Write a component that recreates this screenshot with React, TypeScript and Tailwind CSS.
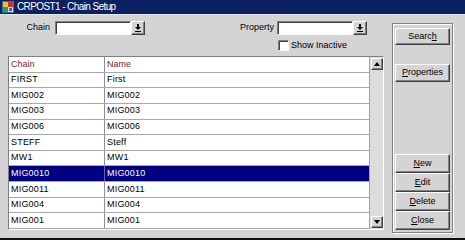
import React from "react";

const rows: [string, string][] = [
  ["FIRST", "First"],
  ["MIG002", "MIG002"],
  ["MIG003", "MIG003"],
  ["MIG006", "MIG006"],
  ["STEFF", "Steff"],
  ["MW1", "MW1"],
  ["MIG0010", "MIG0010"],
  ["MIG0011", "MIG0011"],
  ["MIG004", "MIG004"],
  ["MIG001", "MIG001"],
];

function DropBtn() {
  return (
    <div className="w-[14px] h-[14px] bg-[#d4d4d4] border border-t-white border-l-white border-r-[#404040] border-b-[#404040] shadow-[inset_-1px_-1px_0_#808080] flex items-center justify-center">
      <svg width="8" height="8" viewBox="0 0 8 8">
        <rect x="3" y="0" width="2" height="3" fill="#000" />
        <polygon points="1,3 7,3 4,6" fill="#000" />
        <rect x="1" y="7" width="6" height="1" fill="#000" />
      </svg>
    </div>
  );
}

function Input({ w }: { w: string }) {
  return (
    <div className={`${w} h-[14px] bg-white border border-t-[#808080] border-l-[#808080] border-r-white border-b-white shadow-[inset_1px_1px_0_#404040]`} />
  );
}

function Btn({ children, h }: { children: React.ReactNode; h: string }) {
  return (
    <div className={`${h} w-full bg-[#d4d4d4] border border-t-white border-l-white border-r-[#404040] border-b-[#404040] shadow-[inset_-1px_-1px_0_#808080] flex items-center justify-center text-[9px] text-black`}>
      {children}
    </div>
  );
}

function ArrowBtn({ up }: { up: boolean }) {
  return (
    <div className="w-[12px] h-[12px] bg-[#d4d4d4] border border-t-white border-l-white border-r-[#404040] border-b-[#404040] shadow-[inset_-1px_-1px_0_#808080] flex items-center justify-center">
      <svg width="6" height="4" viewBox="0 0 6 4">
        {up ? <polygon points="0,4 6,4 3,0" fill="#000" /> : <polygon points="0,0 6,0 3,4" fill="#000" />}
      </svg>
    </div>
  );
}

export default function App() {
  return (
    <div className="w-[465px] h-[240px] bg-[#d4d4d4] flex flex-col overflow-hidden" style={{ fontFamily: '"Liberation Sans", Arial, sans-serif' }}>
      {/* Title bar */}
      <div className="h-[14px] bg-[#0b2161] flex items-center pl-[2px] gap-[3px] shrink-0">
        <svg width="12" height="12" viewBox="0 0 12 12">
          <rect x="0" y="0" width="12" height="12" fill="#3a6ea5" />
          <rect x="1" y="1" width="5" height="5" fill="#f0c020" />
          <rect x="6" y="1" width="5" height="5" fill="#d03030" />
          <rect x="1" y="6" width="5" height="5" fill="#30a040" />
          <rect x="6" y="6" width="5" height="5" fill="#e0e0e0" />
          <rect x="7" y="7" width="3" height="3" fill="#4060c0" />
        </svg>
        <span className="text-white text-[10px] tracking-[-0.6px] leading-none">CRPOST1 - Chain Setup</span>
      </div>
      <div className="h-px bg-[#e8e8e8] shrink-0" />
      {/* Body */}
      <div className="flex flex-1 border-b-2 border-b-[#101010]">
        {/* Left column */}
        <div className="ml-[8px] w-[376px] flex flex-col">
          <div className="mt-[6px] flex items-center h-[14px]">
            <div className="w-[42px] text-right text-[9px] text-black">Chain</div>
            <div className="ml-[5px] flex">
              <Input w="w-[76px]" />
              <DropBtn />
            </div>
            <div className="w-[129px] text-right text-[9px] text-black">Property</div>
            <div className="ml-[3px] flex">
              <Input w="w-[76px]" />
              <DropBtn />
            </div>
          </div>
          <div className="mt-[5px] ml-[270px] flex items-center h-[11px]">
            <div className="w-[11px] h-[11px] bg-white border border-t-[#808080] border-l-[#808080] border-r-white border-b-white shadow-[inset_1px_1px_0_#404040]" />
            <span className="ml-[2px] text-[9px] text-black">Show Inactive</span>
          </div>
          {/* Table */}
          <div className="mt-[5px] h-[174px] flex border border-t-[#808080] border-l-[#808080] border-r-white border-b-white">
            <div className="w-[361px] bg-white flex flex-col border-r border-r-[#a0a0a0]">
              <div className="h-[15.7px] flex border-b border-b-[#a8a8a8] text-[9px] text-[#8b1a1a]">
                <div className="w-[96px] pl-[2px] border-r border-r-[#909090] flex items-center">Chain</div>
                <div className="flex-1 pl-[2px] flex items-center">Name</div>
              </div>
              {rows.map(([c, n], i) => {
                const sel = c === "MIG0010";
                return (
                  <div
                    key={i}
                    className={`h-[15.7px] flex border-b border-b-[#a8a8a8] text-[9px] tracking-[0.2px] ${sel ? "bg-[#000080] text-white" : "text-black"}`}
                  >
                    <div className={`w-[96px] pl-[2px] border-r flex items-center ${sel ? "border-r-[#6060a0]" : "border-r-[#909090]"}`}>{c}</div>
                    <div className="flex-1 pl-[2px] flex items-center">{n}</div>
                  </div>
                );
              })}
            </div>
            <div className="flex-1 bg-[#dcdcdc] flex flex-col justify-between items-center py-[1px]">
              <ArrowBtn up />
              <ArrowBtn up={false} />
            </div>
          </div>
        </div>
        {/* Right panel */}
        <div className="ml-[8px] mt-[8px] mb-[5px] w-[61px] border border-[#808080] shadow-[inset_1px_1px_0_#fff,1px_1px_0_#fff] flex flex-col px-[2px] pt-[4px] pb-[2px]">
          <Btn h="h-[17px]">
            <span>Searc<span className="underline">h</span></span>
          </Btn>
          <div className="mt-[19px]">
            <Btn h="h-[18px]">
              <span><span className="underline">P</span>roperties</span>
            </Btn>
          </div>
          <div className="mt-auto flex flex-col">
            <Btn h="h-[19px]"><span><span className="underline">N</span>ew</span></Btn>
            <Btn h="h-[19px]"><span><span className="underline">E</span>dit</span></Btn>
            <Btn h="h-[19px]"><span><span className="underline">D</span>elete</span></Btn>
            <Btn h="h-[19px]"><span><span className="underline">C</span>lose</span></Btn>
          </div>
        </div>
      </div>
    </div>
  );
}
